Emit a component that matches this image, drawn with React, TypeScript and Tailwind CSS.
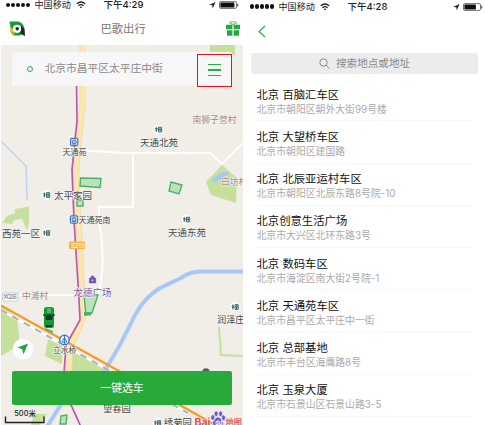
import React from 'react';

const places = [
  ['北京 百脑汇车区', '北京市朝阳区朝外大街99号楼'],
  ['北京 大望桥车区', '北京市朝阳区建国路'],
  ['北京 北辰亚运村车区', '北京市朝阳区北辰东路8号院-10'],
  ['北京创意生活广场', '北京市大兴区北环东路3号'],
  ['北京 数码车区', '北京市海淀区南大街2号院-1'],
  ['北京 天通苑车区', '北京市昌平区太平庄中一街'],
  ['北京 总部基地', '北京市丰台区海鹰路8号'],
  ['北京 玉泉大厦', '北京市石景山区石景山路3-5'],
];

type Label = { x: number; y: number; text: string; size: number; color: string };

const labels: Label[] = [
  { x: 192.5, y: 122.5, text: '南狮子营村', size: 8.8, color: '#a18b86' },
  { x: 140, y: 145.5, text: '天通北苑', size: 9.5, color: '#444b4b' },
  { x: 62.5, y: 154.5, text: '天通苑', size: 8, color: '#444' },
  { x: 54, y: 198.5, text: '太平家园', size: 9.5, color: '#444b4b' },
  { x: 221, y: 185, text: '白坊村', size: 8.8, color: '#a18b86' },
  { x: 78.5, y: 222.5, text: '天通苑南', size: 8, color: '#444' },
  { x: 2, y: 236.5, text: '西苑一区', size: 9.5, color: '#444b4b' },
  { x: 168, y: 235.5, text: '天通东苑', size: 9.5, color: '#444b4b' },
  { x: 73.5, y: 295.5, text: '龙德广场', size: 9.5, color: '#7458b5' },
  { x: 22, y: 299, text: '中滩村', size: 8.7, color: '#a18b86' },
  { x: 217, y: 322.5, text: '润泽庄', size: 9.2, color: '#444b4b' },
  { x: 53, y: 352.7, text: '立水桥', size: 7.8, color: '#444' },
  { x: 103, y: 412, text: '望春园', size: 9.3, color: '#444b4b' },
  { x: 164, y: 426, text: '绣菊园', size: 9.3, color: '#444b4b' },
];

const buildings: [number, number][] = [
  [158.5, 129.5], [46.5, 195], [186.5, 219.5], [46.5, 233], [235, 307], [157.5, 423],
];

function StatusBar({ time, inset, full }: { time: string; inset: string; full: boolean }) {
  return (
    <div className={`flex items-center text-[9.1px] leading-[10px] text-[#222] ${inset}`}>
      <div className="flex w-[29px] shrink-0 gap-[1px]">
        {[0, 1, 2, 3, 4].map((i) => (
          <i key={i} className="size-[4.2px] rounded-full bg-[#111]" />
        ))}
      </div>
      <span className="w-[41px] shrink-0">中国移动</span>
      <svg className="h-[8px] w-[10px] shrink-0" viewBox="0 0 10 8" fill="none" stroke="#222" strokeWidth="1.2">
        <path d="M.7 2.9Q5-.9 9.3 2.9M2.4 4.7Q5 2.4 7.6 4.7" />
        <path d="M5 7.3 3.7 5.9Q5 5 6.3 5.9Z" fill="#222" stroke="none" />
      </svg>
      <span className="ml-[18px] w-[105px] shrink-0 text-[9.5px] font-medium">{time}</span>
      <svg className="h-[8px] w-[30px] shrink-0" viewBox="0 0 30 8">
        <path d="M0 4 6.5 1 3.7 7.5 3.3 4.3Z" fill="#222" />
        <rect x="10.5" y=".6" width="17" height="6.8" rx="1.3" fill="#fff" stroke="#333" strokeWidth=".7" />
        <rect x="11.4" y="1.4" width={full ? 14 : 11.5} height="5.2" rx=".5" fill="#111" />
        <path d="M28.8 2.8V5.4" stroke="#333" strokeWidth=".9" />
      </svg>
    </div>
  );
}

function Logo() {
  return (
    <svg className="h-[16px] w-[17px]" viewBox="0 0 17 16">
      <path d="M.5.5H8.5A7 7 0 0 1 15 7L14.4 12 11 14.5H5Q0 11 1.5 6Z" fill="#159c38" />
      <path d="M1 6 4 8 6 13.8Q0 11 1 6Z" fill="#f0c51d" />
      <path d="M12 5 15.5 7.5 16 15 11.5 12.8Z" fill="#272525" />
      <circle cx="8" cy="7.8" r="4.1" fill="white" />
      <circle cx="8.2" cy="7.8" r="1.7" fill="#222" />
    </svg>
  );
}

function Gift() {
  return (
    <svg className="h-[15px] w-[14px]" viewBox="0 0 14 15">
      <path d="M7 3.8 3.2 2 4.5.7 7 3.8 9.5.7 10.8 2ZM4.5.7H9.5" fill="none" stroke="#58ba6c" strokeWidth=".8" />
      <path d="M0 3.7H6.4V8.2H0ZM7.6 3.7H14V8.2H7.6ZM1 9.2H6.4V14.7H1ZM7.6 9.2H13V14.7H7.6Z" fill="#22aa3e" />
    </svg>
  );
}

function Station({ x, y }: { x: number; y: number }) {
  return (
    <g transform={`translate(${x} ${y})`} fill="none" stroke="#4576c5">
      <rect x="-3.6" y="-3.6" width="7.2" height="7.2" rx="1" fill="#dce8fa" strokeWidth="1.2" />
      <circle r="2" strokeWidth="1" />
      <path d="M0-1.6V2M-2 2H2" strokeWidth=".8" />
    </g>
  );
}

function MapDrawing() {
  return (
    <svg className="block h-[380px] w-[242px]" viewBox="1 45 242 380">
      <rect x="1" y="45" width="242" height="380" fill="#f1eee8" />
      <g fill="#c5df9d">
        <path d="M210 45H235V56L230 52H210Z" />
        <path d="M15 209 29 206.5V220L28 229 26 228 22 219 14 220 12 224 2 223 7 216 15 213Z" />
        <path d="M222 165 237 178 236 203 211 195 206 182Z" />
        <path d="M1 306 17 317 20 345 1 356ZM48 339 62 346 62 364 45 356ZM72 349 109 371H71ZM34 414H47L40 425H31Z" />
      </g>
      <path d="M219 327 221 355 243 356" fill="none" stroke="#c5df9d" strokeWidth="2" />
      <g fill="none" stroke="#fff" strokeWidth="1.8">
        <path d="M79 150 125 153H210L222 164 243 143M133 153V207H99V220Q105 255 101 280L98 297M18 295H75" />
      </g>
      <path d="M1 141 26 166 27 200" fill="none" stroke="#bed4f2" strokeWidth="1.5" />
      <path d="M212 179 221 173 228 171 228 175 214 183Z" fill="#a6c7fa" />
      <path d="M243 271.5H203Q190 271 181 278L160 288Q145 297 135 315 118 351 101 376L68 393 47 427" fill="none" stroke="#a5c8fc" strokeWidth="4" />
      <path d="M82.5 45V105Q80 127 78 148L76 178 78 215 80 245 82 300 83 319 70 348 68 405" fill="none" stroke="#f2d7a0" strokeWidth="6" />
      <path d="M82.5 45V105Q80 127 78 148L76 178 78 215 80 245 82 300 83 319 70 348 68 405" fill="none" stroke="#fde7ae" strokeWidth="4.5" />
      <path d="M1 310 110 371 188 413" fill="none" stroke="#fff" strokeWidth="2.5" />
      <path d="M1 310 110 371 188 413" fill="none" stroke="#aaa" strokeWidth="1.8" strokeDasharray="7 6" />
      <path d="M1 305.5 119 371 178 404 217 426" fill="none" stroke="#f59a23" strokeWidth="2.1" />
      <path d="M76.5 80 77 121 72 170 74 220 79 300 80 320 66 345 64 374V392L71 405 81 427" fill="none" stroke="#bd59b1" strokeWidth="1.7" />
      <g fill="#bde1bd" stroke="#4bb268" strokeWidth="1.4">
        <path d="M80.5 178 101 178.5 100 187.5 80 186ZM171 182 182 185 179 194 169 191ZM84 295H98L92 313 86 315ZM77 200H83V206H77ZM61 416 67 415 66 424H60Z" />
      </g>
      <path d="M84 312H91V315.5H84Z" fill="#4bb268" />
      <rect x="69" y="241.5" width="16" height="7.5" rx="1" fill="#f1b654" />
      <text x="71" y="247.7" fontSize="6" fill="#fff">S213</text>
      <rect x="2.5" y="293" width="15.5" height="8" rx="1" fill="#fff" stroke="#bbb" strokeWidth=".7" />
      <text x="3.3" y="299.3" fontSize="6.2" textLength="13.5" fill="#666">X026</text>
      <Station x={74.2} y={142} />
      <Station x={74} y={219.5} />
      {buildings.map(([x, y]) => (
        <g key={`${x}-${y}`} transform={`translate(${x} ${y})`}>
          <circle r="4.8" fill="#fffefa" />
          <path d="M-3.4-1H-1M-2.2-2.5V2.5M-3 1-1 0M0-2.3H3.2V2.4H0ZM0 0H3.2M1.6-2V2" fill="none" stroke="#3c666b" strokeWidth="1" />
        </g>
      ))}
      <circle cx="92.5" cy="280" r="5" fill="#fff" />
      <path d="M89.3 278H95.8V283H89.3ZM91 278V276.5Q92.5 275 94 276.5V278" fill="#7654b7" stroke="#7654b7" strokeWidth=".7" />
      <circle cx="92.5" cy="280.2" r=".8" fill="#fff" />
      <g transform="translate(49 318)">
        <path d="M-4 10 4 13V15L-4 12Z" fill="#5eb84d" />
        <rect x="-5" y="-11" width="10" height="21" rx="2.5" fill="#139a34" />
        <path d="M-6-3H6" stroke="#145627" strokeWidth="1.4" />
        <path d="M-3.7-2Q0-4 3.7-2L3 2H-3Z" fill="#15391f" />
        <path d="M-3 7H3V9H-3Z" fill="#15391f" />
        <path d="M-2-10H2V-5H-2Z" fill="#4cb864" />
      </g>
      <circle cx="64.5" cy="340" r="4.7" fill="#eef5ff" stroke="#3979c5" strokeWidth="1.4" />
      <path d="M64.5 337.5 67 342H62ZM64.5 335.3V344.5" fill="none" stroke="#3979c5" strokeWidth="1" />
      <circle cx="206" cy="372" r="3.7" fill="#4d6265" />
      {labels.map((l) => (
        <text key={l.text} x={l.x} y={l.y} fontSize={l.size} fill={l.color} stroke="#f8f6f1" strokeWidth="1.2" paintOrder="stroke">
          {l.text}
        </text>
      ))}
      <circle cx="23" cy="349" r="10.3" fill="#fff" />
      <path d="M17.5 347.5 28 343.5 23.5 354.5 22.2 349.3Z" fill="#21a342" />
      <path d="M5.5 416.5V422.5H44V416.5" fill="none" stroke="#222" strokeWidth="1.4" />
      <text x="14.3" y="416.3" fontSize="7.4" fontWeight="500" fill="#222">500米</text>
      <text x="194.5" y="426" fontSize="10.5" fontWeight="700" fill="#e24951" stroke="#fff" strokeWidth="1" paintOrder="stroke">Bai</text>
      <g fill="#655fd1" stroke="#fff" strokeWidth=".6">
        <ellipse cx="212.8" cy="417.5" rx="2" ry="2.8" />
        <ellipse cx="216.1" cy="413.7" rx="2" ry="2.8" />
        <ellipse cx="220.6" cy="413.7" rx="2" ry="2.8" />
        <ellipse cx="223.5" cy="417.7" rx="2" ry="2.8" />
        <path d="M218 417C215 417 215 420 212.5 422Q212 426 215 426H221Q225 425 223 422C221 420 221 417 218 417Z" />
      </g>
      <text x="215.2" y="424.5" fontSize="5.5" fontWeight="700" fill="#fff">du</text>
      <text x="225.5" y="425" fontSize="8.2" fontWeight="700" fill="#e56269">地图</text>
    </svg>
  );
}

export default function App() {
  return (
    <main className="flex h-[425px] w-[485px] overflow-hidden bg-white font-['Inter','Noto_Sans_CJK_SC',sans-serif]">
      <section className="w-[243px] shrink-0">
        <header className="h-[45px]">
          <StatusBar time="下午4:29" inset="h-[10px] pl-[5.5px]" full />
          <div className="grid h-[35px] grid-cols-[80px_1fr_80px] items-center pt-[2px] pr-[2px] pl-[9px]">
            <Logo />
            <h1 className="pt-[2px] pl-[11.5px] text-[11.3px] text-[#777]">巴歌出行</h1>
            <div className="flex justify-end pr-[1px]"><Gift /></div>
          </div>
        </header>
        <div className="relative ml-px h-[380px] w-[242px]">
          <MapDrawing />
          <div className="absolute top-[7px] left-[11px] flex h-[34px] w-[220px] items-center rounded-[2px] bg-[#f7f7f7]">
            <i className="ml-[14.5px] size-[6px] rounded-full border-[1.5px] border-[#2cae4a]" />
            <span className="ml-[12px] grow pt-[1px] text-[10.75px] whitespace-nowrap text-[#8b8b8b]">北京市昌平区太平庄中街</span>
            <button className="mt-[2px] flex h-[33px] w-[35.5px] flex-col items-center justify-center gap-[4px] border-[1.5px] border-[#df1723]">
              <i className="h-[1.2px] w-[13px] bg-[#29ab48]" />
              <i className="h-[1.2px] w-[13px] bg-[#29ab48]" />
              <i className="h-[1.2px] w-[13px] bg-[#29ab48]" />
            </button>
          </div>
          <button className="absolute top-[326px] left-[11px] h-[34px] w-[220px] rounded-[2px] bg-[#27aa39] pt-[2px] text-[10.8px] text-white">一键选车</button>
        </div>
      </section>
      <section className="w-[242px] shrink-0">
        <StatusBar time="下午4:28" inset="h-[10px] pt-[3px] pl-[6.5px]" full={false} />
        <div className="flex h-[42px] items-center pl-[15px]">
          <svg className="h-[13px] w-[8px]" viewBox="0 0 8 13" fill="none" stroke="#35b34e" strokeWidth="1.3"><path d="M7 1 1 6.5 7 12" /></svg>
        </div>
        <div className="mt-[1px] ml-[8px] flex h-[21px] w-[227px] items-center rounded-[3px] bg-[#ececec] pl-[68px] text-[10.6px] text-[#8a8a8a]">
          <svg className="mr-[6px] size-[11px]" viewBox="0 0 11 11" fill="none" stroke="#8a8a8a" strokeWidth="1"><circle cx="4.5" cy="4.5" r="3.7" /><path d="m7.2 7.2 3.2 3.2" /></svg>
          搜索地点或地址
        </div>
        <ul className="mt-[5px] ml-[13.5px] w-[215px]">
          {places.map(([name, address]) => (
            <li key={name} className="h-[42.25px] border-b border-[#f7f7f7] pt-[8.5px]">
              <h2 className="text-[11.35px] leading-[14px] text-[#111]">{name}</h2>
              <p className="text-[9.85px] leading-[15.5px] text-[#aaa]">{address}</p>
            </li>
          ))}
        </ul>
      </section>
    </main>
  );
}
